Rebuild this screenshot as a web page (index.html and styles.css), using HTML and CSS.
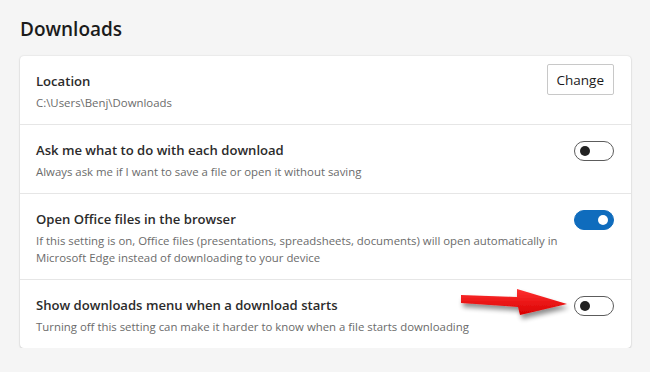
FILE: index.html
```html
<!DOCTYPE html>
<html lang="en">
<head>
    <meta charset="UTF-8">
    <title>Downloads</title>
    <link rel="stylesheet" href="styles.css">
</head>
<body>
    <h2 class="page-title">Downloads</h2>

    <div class="card">
        <!-- Location -->
        <div class="row">
            <div class="text">
                <div class="title">Location</div>
                <div class="sub">C:\Users\Benj\Downloads</div>
            </div>
            <button class="btn">Change</button>
        </div>

        <div class="row">
            <div class="text">
                <div class="title">Ask me what to do with each download</div>
                <div class="sub">Always ask me if I want to save a file or open it without saving</div>
            </div>
            <span class="toggle"></span>
        </div>

        <div class="row">
            <div class="text">
                <div class="title">Open Office files in the browser</div>
                <div class="sub">If this setting is on, Office files (presentations, spreadsheets, documents) will open automatically in Microsoft Edge instead of downloading to your device</div>
            </div>
            <span class="toggle on"></span>
        </div>

        <div class="row">
            <div class="text">
                <div class="title">Show downloads menu when a download starts</div>
                <div class="sub">Turning off this setting can make it harder to know when a file starts downloading</div>
            </div>
            <span class="toggle"></span>
            <!-- red pointer arrow -->
            <svg class="arrow" width="120" height="40" viewBox="0 0 120 40">
                <defs>
                    <linearGradient id="red" x1="0" y1="0" x2="0" y2="1">
                        <stop offset="0" stop-color="#ff3030"/>
                        <stop offset="1" stop-color="#d80000"/>
                    </linearGradient>
                    <filter id="shadow" x="-20%" y="-50%" width="140%" height="200%">
                        <feGaussianBlur in="SourceAlpha" stdDeviation="2.5"/>
                        <feOffset dx="2" dy="4" result="b"/>
                        <feComponentTransfer><feFuncA type="linear" slope="0.45"/></feComponentTransfer>
                        <feMerge><feMergeNode/><feMergeNode in="SourceGraphic"/></feMerge>
                    </filter>
                </defs>
                <polygon filter="url(#shadow)" fill="url(#red)"
                         points="3,9 59,11 59,3 109,18 62,29 60,21 3,17"/>
            </svg>
        </div>
    </div>
</body>
</html>
```

FILE: styles.css
```css
body {
    margin: 0;
    padding: 0 19px 0 20px;
    background: #f5f5f5;
    font-family: "Open Sans", "Noto Sans", sans-serif;
    color: #1b1b1b;
}
.page-title {
    margin: 0;
    padding: 16px 0 14px 0;
    font-size: 19px;
    font-weight: 600;
    line-height: 26px;
}
.card {
    background: #fff;
    border-radius: 4px;
    box-shadow: 0 0 2px rgba(0, 0, 0, 0.14), 0 1px 2px rgba(0, 0, 0, 0.12);
}
.row {
    position: relative;
    display: flex;
    align-items: flex-start;
    justify-content: space-between;
    padding: 14px 17px 13px 16px;
    border-top: 1px solid #e6e6e6;
}
.row:first-child {
    border-top: none;
}
.text {
    flex: 1;
    padding-right: 6px;
}
.title {
    font-size: 13.1px;
    line-height: 22px;
    font-weight: 600;
    color: #2b2b2b;
}
.sub {
    margin-top: 2px;
    font-size: 11.4px;
    line-height: 17px;
    color: #6b6b6b;
}
.btn {
    margin-top: -6px;
    height: 31px;
    padding: 0 9px;
    background: #fff;
    border: 1px solid #c8c8c8;
    border-radius: 2px;
    font-family: inherit;
    font-size: 13.5px;
    color: #1b1b1b;
}
.toggle {
    position: relative;
    margin-top: 2px;
    width: 40px;
    height: 20px;
    box-sizing: border-box;
    border: 1px solid #5c5c5c;
    border-radius: 10px;
    flex-shrink: 0;
}
.toggle::after {
    content: "";
    position: absolute;
    left: 5px;
    top: 4px;
    width: 10px;
    height: 10px;
    border-radius: 50%;
    background: #222;
}
.toggle.on {
    background: #0f6cbd;
    border-color: #0f6cbd;
}
.toggle.on::after {
    left: auto;
    right: 5px;
    background: #fff;
}
.arrow {
    position: absolute;
    left: 438px;
    top: 6px;
}
```
